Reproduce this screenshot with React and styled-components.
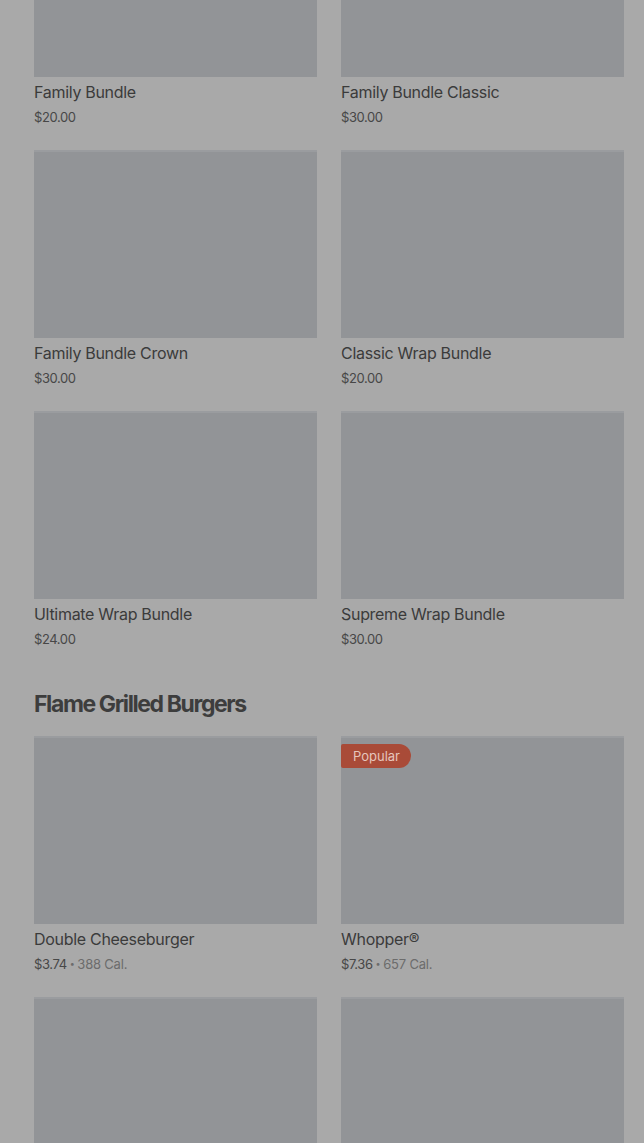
import React from 'react'
import styled, { createGlobalStyle } from 'styled-components'

const GlobalStyle = createGlobalStyle`
  html, body {
    margin: 0;
    padding: 0;
    height: 1143px;
    background: #a9a9a9;
    font-family: Inter, "Noto Sans", sans-serif;
    overflow: hidden;
  }
`

const bundles = [
  { id: 1, name: 'Family Bundle', price: '$20.00' },
  { id: 2, name: 'Family Bundle Classic', price: '$30.00' },
  { id: 3, name: 'Family Bundle Crown', price: '$30.00' },
  { id: 4, name: 'Classic Wrap Bundle', price: '$20.00' },
  { id: 5, name: 'Ultimate Wrap Bundle', price: '$24.00' },
  { id: 6, name: 'Supreme Wrap Bundle', price: '$30.00' }
]

// the last two are scrolled out of view, only their pictures show
const burgers = [
  { id: 7, name: 'Double Cheeseburger', price: '$3.74', cal: '388 Cal.' },
  { id: 8, name: 'Whopper®', price: '$7.36', cal: '657 Cal.', popular: true },
  { id: 9 },
  { id: 10 }
]

export default function App() {
  return (
    <Page>
      <GlobalStyle />
      <Section>
        <Grid>
          {bundles.map(item => <Card key={item.id} item={item} />)}
        </Grid>
      </Section>
      <Section>
        <Heading>Flame Grilled Burgers</Heading>
        <Grid>
          {burgers.map(item => <Card key={item.id} item={item} />)}
        </Grid>
      </Section>
    </Page>
  )
}

function Card({ item }) {
  return (
    <Item>
      <Thumb>
        {item.popular && <Badge>Popular</Badge>}
      </Thumb>
      {item.name && <Name>{item.name}</Name>}
      {item.price && (
        <Meta>
          {item.price}
          {item.cal && (
            <>
              <Dot>•</Dot>
              <Cal>{item.cal}</Cal>
            </>
          )}
        </Meta>
      )}
    </Item>
  )
}

const Page = styled.div`
  margin-top: -111px;
  padding: 0 20px 0 34px;
  height: 1254px;
  overflow: hidden;
`

const Section = styled.section`
  & + & {
    margin-top: 41px;
  }
`

const Heading = styled.h2`
  margin: 0 0 16px;
  font-size: 23px;
  line-height: 32px;
  font-weight: 700;
  letter-spacing: -1.4px;
  color: #3d3d3d;
`

const Grid = styled.div`
  display: grid;
  grid-template-columns: 1fr 1fr;
  column-gap: 24px;
  row-gap: 25px;
`

const Item = styled.div`
  display: flex;
  flex-direction: column;
`

const Thumb = styled.div`
  position: relative;
  height: 188px;
  background: #929497;
  border-top: 2px solid #9a9c9f;
  box-sizing: border-box;
`

const Badge = styled.span`
  position: absolute;
  top: 6px;
  left: 0;
  height: 24px;
  padding: 0 11px 0 12px;
  display: flex;
  align-items: center;
  background: #a94b38;
  color: #e6c5bc;
  font-size: 13px;
  border-radius: 2px 12px 12px 2px;
`

const Name = styled.div`
  margin-top: 5px;
  font-size: 16px;
  line-height: 20px;
  letter-spacing: -0.3px;
  color: #3b3b3b;
`

const Meta = styled.div`
  margin-top: 7px;
  font-size: 13px;
  line-height: 16px;
  color: #474747;
  letter-spacing: -0.4px;
`

const Dot = styled.span`
  margin: 0 3px;
  color: #6c6c6c;
  font-size: 9px;
  vertical-align: 2px;
`

const Cal = styled.span`
  color: #6c6c6c;
  letter-spacing: -0.2px;
`
